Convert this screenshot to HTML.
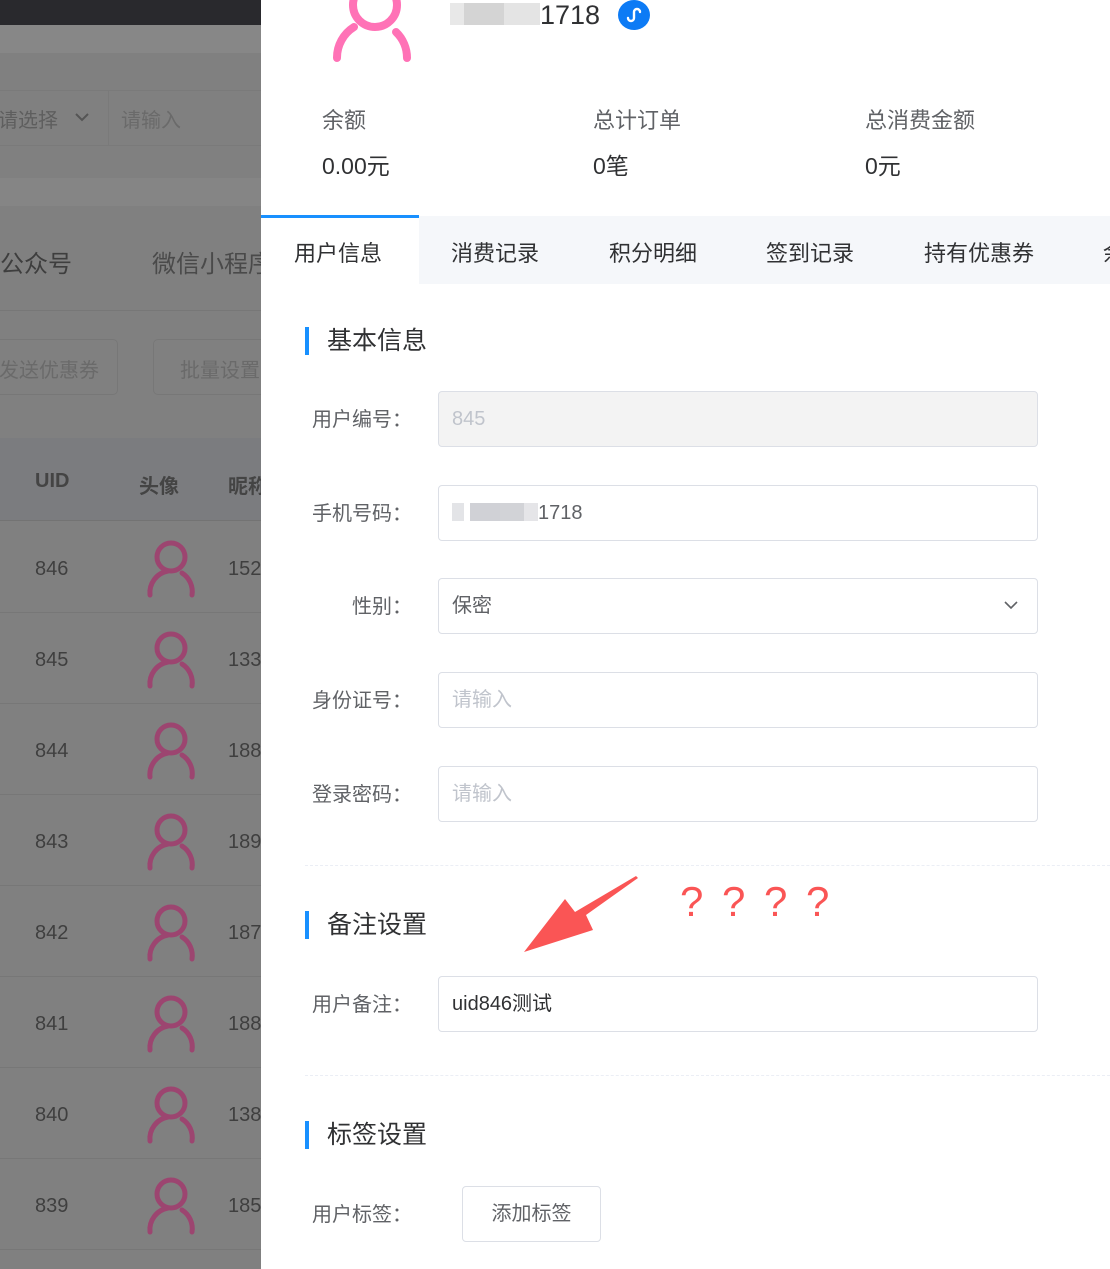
<!DOCTYPE html>
<html><head><meta charset="utf-8"><style>
*{margin:0;padding:0;box-sizing:border-box}
body{width:1110px;height:1269px;position:relative;overflow:hidden;background:#fff;font-family:"Liberation Sans","Noto Sans CJK SC",sans-serif}
.a{position:absolute;white-space:nowrap}
.l{background:#808080;position:absolute;left:0;top:0;width:261px;height:1269px;overflow:hidden}
.lt{color:#3f3f3f;font-size:20px}
.row{position:absolute;left:0;width:261px;height:91px;border-bottom:1px solid #777}
.lab{font-size:20px;color:#606266;text-align:right;width:120px;left:292px}
.inp{position:absolute;left:438px;width:600px;height:56px;border:1px solid #dcdfe6;border-radius:4px;font-size:20px;color:#606266;padding:0 13px;line-height:54px}
.sec{position:absolute;left:305px;border-left:4px solid #1890ff;padding-left:18px;font-size:25px;color:#303133;height:28px;line-height:28px}
.dash{position:absolute;left:305px;width:805px;border-top:1px dashed #ebeef5}
</style></head><body>
<div class="l">
<div class="a" style="left:0;top:0;width:261px;height:25px;background:#29292d"></div>
<div class="a" style="left:0;top:25px;width:261px;height:28px;background:#878787"></div>
<div class="a" style="left:0;top:90px;width:261px;height:56px;border-top:1px solid #7a7a7a;border-bottom:1px solid #7a7a7a"></div>
<div class="a" style="left:108px;top:90px;width:1px;height:56px;background:#7a7a7a"></div>
<div class="a" style="left:-2px;top:104px;font-size:20px;color:#5e5e5e">请选择</div>
<svg class="a" style="left:74px;top:111px" width="16" height="12"><path d="M2 3l6 6 6-6" fill="none" stroke="#555" stroke-width="2"/></svg>
<div class="a" style="left:121px;top:104px;font-size:20px;color:#6a6a6a">请输入</div>
<div class="a" style="left:0;top:178px;width:261px;height:28px;background:#858585"></div>
<div class="a" style="left:0;top:244px;font-size:24px;color:#3e3e3e">公众号</div>
<div class="a" style="left:152px;top:244px;font-size:24px;color:#4a4a4a">微信小程序</div>
<div class="a" style="left:0;top:310px;width:261px;height:1px;background:#777"></div>
<div class="a" style="left:-10px;top:339px;width:128px;height:56px;border:1px solid #777;border-radius:5px;font-size:20px;color:#6a6a6a;padding:14px 0 0 8px">发送优惠券</div>
<div class="a" style="left:153px;top:339px;width:140px;height:56px;border:1px solid #777;border-radius:5px;font-size:20px;color:#6a6a6a;padding:14px 0 0 26px">批量设置</div>
<div class="a" style="left:0;top:438px;width:261px;height:83px;background:#7b7c7f;border-bottom:1px solid #737373"></div>
<div class="a" style="left:35px;top:470px;font-size:20px;font-weight:bold;color:#444">UID</div>
<div class="a" style="left:139px;top:470px;font-size:20px;font-weight:bold;color:#444">头像</div>
<div class="a" style="left:228px;top:470px;font-size:20px;font-weight:bold;color:#444">昵称</div>
<div style="position:absolute;left:0;top:522px">
<div class="row" style="top:0"><span class="a lt" style="left:35px;top:36px">846</span><span class="a lt" style="left:228px;top:36px">152</span></div>
<div class="row" style="top:91px"><span class="a lt" style="left:35px;top:36px">845</span><span class="a lt" style="left:228px;top:36px">133</span></div>
<div class="row" style="top:182px"><span class="a lt" style="left:35px;top:36px">844</span><span class="a lt" style="left:228px;top:36px">188</span></div>
<div class="row" style="top:273px"><span class="a lt" style="left:35px;top:36px">843</span><span class="a lt" style="left:228px;top:36px">189</span></div>
<div class="row" style="top:364px"><span class="a lt" style="left:35px;top:36px">842</span><span class="a lt" style="left:228px;top:36px">187</span></div>
<div class="row" style="top:455px"><span class="a lt" style="left:35px;top:36px">841</span><span class="a lt" style="left:228px;top:36px">188</span></div>
<div class="row" style="top:546px"><span class="a lt" style="left:35px;top:36px">840</span><span class="a lt" style="left:228px;top:36px">138</span></div>
<div class="row" style="top:637px"><span class="a lt" style="left:35px;top:36px">839</span><span class="a lt" style="left:228px;top:36px">185</span></div>
</div>
<svg class="a" style="left:140px;top:540px" width="62" height="740">
<defs><g id="u"><circle cx="31" cy="17" r="14" fill="none" stroke="#9c4570" stroke-width="5"/><path d="M10 55 A22 22 0 0 1 28 31 M42 33 A22 22 0 0 1 52 55" fill="none" stroke="#9c4570" stroke-width="5" stroke-linecap="round"/></g></defs>
<use href="#u" y="0"/><use href="#u" y="91"/><use href="#u" y="182"/><use href="#u" y="273"/><use href="#u" y="364"/><use href="#u" y="455"/><use href="#u" y="546"/><use href="#u" y="637"/>
</svg>
</div>
<svg class="a" style="left:330px;top:0" width="90" height="62"><circle cx="45" cy="5" r="22" fill="none" stroke="#ff72b6" stroke-width="8"/><path d="M7 58 A36 36 0 0 1 24 27 M66 32 A36 36 0 0 1 77 58" fill="none" stroke="#ff72b6" stroke-width="8" stroke-linecap="round"/></svg>
<div class="a" style="left:450px;top:3px;width:90px;height:22px;background:linear-gradient(90deg,#e8e8e8 0 14px,#d4d4d4 14px 54px,#e4e4e4 54px)"></div>
<div class="a" style="left:540px;top:0;font-size:27px;color:#303133">1718</div>
<svg class="a" style="left:618px;top:0" width="32" height="30"><ellipse cx="16" cy="15" rx="16" ry="15" fill="#0d7bf5"/><path d="M10 18 A3 3 0 1 0 16 18 V12 A3 3 0 1 1 22 12" fill="none" stroke="#fff" stroke-width="2.4" stroke-linecap="round"/></svg>
<div class="a" style="left:322px;top:103px;font-size:22px;color:#606266">余额</div>
<div class="a" style="left:322px;top:147px;font-size:23px;color:#303133">0.00元</div>
<div class="a" style="left:593px;top:103px;font-size:22px;color:#606266">总计订单</div>
<div class="a" style="left:593px;top:147px;font-size:23px;color:#303133">0笔</div>
<div class="a" style="left:865px;top:103px;font-size:22px;color:#606266">总消费金额</div>
<div class="a" style="left:865px;top:147px;font-size:23px;color:#303133">0元</div>
<div class="a" style="left:261px;top:216px;width:849px;height:68px;background:#f5f7fa"></div>
<div class="a" style="left:261px;top:215px;width:158px;height:69px;background:#fff;border-top:3px solid #1890ff"></div>
<div class="a" style="left:294px;top:236px;font-size:22px;color:#303133">用户信息</div>
<div class="a" style="left:451px;top:236px;font-size:22px;color:#303133">消费记录</div>
<div class="a" style="left:609px;top:236px;font-size:22px;color:#303133">积分明细</div>
<div class="a" style="left:766px;top:236px;font-size:22px;color:#303133">签到记录</div>
<div class="a" style="left:924px;top:236px;font-size:22px;color:#303133">持有优惠券</div>
<div class="a" style="left:1103px;top:236px;font-size:22px;color:#303133">余</div>
<div class="sec" style="top:327px">基本信息</div>
<div class="a lab" style="top:403px">用户编号：</div>
<div class="inp" style="top:391px;background:#f3f3f3;color:#c0c4cc">845</div>
<div class="a lab" style="top:497px">手机号码：</div>
<div class="inp" style="top:485px"><span style="display:inline-block;width:86px;height:18px;vertical-align:-2px;background:linear-gradient(90deg,#e3e4e7 0 12px,#fff 12px 18px,#d0d1d6 18px 48px,#d2d3d7 48px 72px,#e5e5e8 72px)"></span>1718</div>
<div class="a lab" style="top:590px">性别：</div>
<div class="inp" style="top:578px">保密<svg style="position:absolute;right:18px;top:20px" width="16" height="12"><path d="M2 3l6 6 6-6" fill="none" stroke="#606266" stroke-width="1.6"/></svg></div>
<div class="a lab" style="top:684px">身份证号：</div>
<div class="inp" style="top:672px;color:#c0c4cc">请输入</div>
<div class="a lab" style="top:778px">登录密码：</div>
<div class="inp" style="top:766px;color:#c0c4cc">请输入</div>
<div class="dash" style="top:865px"></div>
<div class="sec" style="top:911px">备注设置</div>
<svg class="a" style="left:520px;top:875px" width="130" height="85"><path d="M118 3 L66 40 L73 55 L4 77 L45 24 L55 37 L116 1 Z" fill="#fa5555"/></svg>
<div class="a" style="left:680px;top:878px;font-size:42px;color:#fa5555;font-weight:300">
<span class="a" style="left:0">?</span><span class="a" style="left:42px">?</span><span class="a" style="left:84px">?</span><span class="a" style="left:126px">?</span></div>
<div class="a lab" style="top:988px">用户备注：</div>
<div class="inp" style="top:976px;color:#303133">uid846测试</div>
<div class="dash" style="top:1075px"></div>
<div class="sec" style="top:1121px">标签设置</div>
<div class="a lab" style="top:1198px">用户标签：</div>
<div class="a" style="left:462px;top:1186px;width:139px;height:56px;border:1px solid #dcdfe6;border-radius:4px;font-size:20px;color:#606266;text-align:center;line-height:54px">添加标签</div>
</body></html>
